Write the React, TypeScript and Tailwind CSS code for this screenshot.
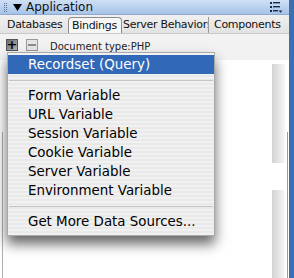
import React from 'react'

const ITEMS = [
  'Form Variable',
  'URL Variable',
  'Session Variable',
  'Cookie Variable',
  'Server Variable',
  'Environment Variable',
]

const font = { fontFamily: '"DejaVu Sans", Verdana, sans-serif' }

function Grip() {
  return (
    <div className="grid grid-cols-2 gap-x-[1px] gap-y-[1px] ml-[4px] mt-[3px]">
      {Array.from({ length: 10 }).map((_, i) => (
        <span key={i} className="w-[1px] h-[1px] bg-[#5a6f8c]" />
      ))}
    </div>
  )
}

function OptionsIcon() {
  return (
    <svg width="13" height="11" viewBox="0 0 13 11" className="mr-[4px]">
      <rect x="0" y="0" width="2" height="2" fill="#1b2a44" />
      <rect x="3" y="0" width="7" height="1.4" fill="#1b2a44" />
      <rect x="0" y="4" width="2" height="2" fill="#1b2a44" />
      <rect x="3" y="4" width="7" height="1.4" fill="#1b2a44" />
      <rect x="0" y="8" width="2" height="2" fill="#1b2a44" />
      <rect x="3" y="8" width="5" height="1.4" fill="#1b2a44" />
      <path d="M8.5 8.5 L12.5 8.5 L10.5 10.8 Z" fill="#1b2a44" />
    </svg>
  )
}

export default function App() {
  return (
    <div className="w-[294px] h-[278px] flex overflow-hidden bg-[#3a6fb1] relative" style={font}>
      <div className="w-[289px] h-full flex flex-col bg-white">
        {/* title bar */}
        <div className="h-[15px] flex items-start bg-gradient-to-b from-[#cfe0f5] to-[#a6c3e8] border-b border-[#8eaad2] shrink-0">
          <Grip />
          <svg width="9" height="8" viewBox="0 0 9 8" className="ml-[6px] mt-[4px]">
            <path d="M0 0 L9 0 L4.5 7 Z" fill="#000" />
          </svg>
          <span className="ml-[4px] text-[12px] leading-[14px] text-[#111]">Application</span>
          <div className="flex-1" />
          <div className="mt-[2px] pr-[2px]">
            <OptionsIcon />
          </div>
        </div>

        {/* tabs */}
        <div className="h-[19px] flex items-end bg-gradient-to-b from-[#f0f0f0] to-[#e2e2e2] text-[11px] tracking-[-0.3px] leading-[15px] text-[#111] shrink-0 border-b border-[#c8c8c8]">
          <div className="w-[68px] pl-[7px] pb-[1px]">Databases</div>
          <div className="w-[54px] h-[16px] border border-b-0 border-[#8c8c8c] rounded-t-[4px] bg-[#f7f7f7] pl-[3px]">Bindings</div>
          <div className="w-[87px] overflow-hidden whitespace-nowrap pl-[1px] pb-[1px] border-r border-[#9a9a9a]">Server Behaviors</div>
          <div className="pl-[5px] pb-[1px] whitespace-nowrap">Components</div>
        </div>

        {/* toolbar */}
        <div className="h-[26px] flex items-start bg-[#f2f2f2] shrink-0 pt-[5px]">
          <div className="ml-[6px] w-[12px] h-[12px] bg-gradient-to-br from-[#6e6e6e] to-[#b4b4b4] border border-[#555] flex items-center justify-center text-black text-[13px] leading-[12px] font-bold">+</div>
          <div className="ml-[8px] w-[12px] h-[12px] bg-[#e4e4e4] border border-[#9a9a9a] flex items-center justify-center">
            <span className="w-[8px] h-[2px] bg-[#8a8a8a]" />
          </div>
          <span className="ml-[12px] mt-[2px] text-[10px] leading-[11px] text-[#222]">Document type:PHP</span>
        </div>

        {/* content */}
        <div className="flex-1 flex">
          <div className="w-[3px] flex flex-col">
            <div className="h-[72px]" />
            <div className="flex-1 border-r border-[#b0b0b0]" />
          </div>
          <div className="flex-1" />
          <div className="w-[13px] flex flex-col pt-[4px]">
            <div className="h-[99px] bg-gradient-to-r from-[#d2d2d2] to-[#f7f7f7]" />
            <div className="h-[27px]" />
            <div className="flex-1 bg-gradient-to-r from-[#d2d2d2] to-[#f7f7f7]" />
          </div>
          <div className="w-[2px]" />
          <div className="w-[2px] flex flex-col">
            <div className="h-[72px]" />
            <div className="flex-1 border-l border-[#9c9c9c]" />
          </div>
        </div>
      </div>

      {/* popup menu */}
      <div className="absolute left-[7px] top-[52px] w-[208px] h-[184px] border border-[#a9a9a9] pt-[2px] text-[13.4px] text-black shadow-[0_8px_12px_rgba(0,0,0,0.6)] bg-[repeating-linear-gradient(0deg,#f1f1f1_0px,#f1f1f1_2px,#e9e9e9_2px,#e9e9e9_4px)]">
        <div className="h-[19px] leading-[19px] pl-[20px] bg-[#3168b8] text-white">Recordset (Query)</div>
        <div className="h-[12px] flex items-center px-[1px]">
          <div className="w-full h-[1px] bg-[#c4c4c4]" />
        </div>
        {ITEMS.map(item => (
          <div key={item} className="h-[19px] leading-[19px] pl-[20px]">{item}</div>
        ))}
        <div className="h-[12px] flex items-center px-[1px]">
          <div className="w-full h-[1px] bg-[#c4c4c4]" />
        </div>
        <div className="h-[19px] leading-[19px] pl-[20px]">Get More Data Sources...</div>
      </div>
    </div>
  )
}
